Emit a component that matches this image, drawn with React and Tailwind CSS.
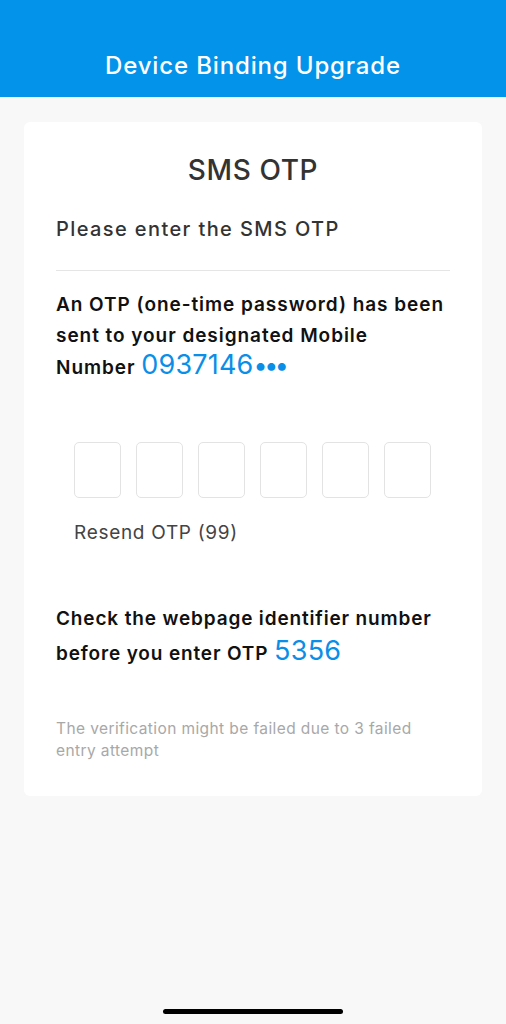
export default function App() {
  const boxes = [0, 1, 2, 3, 4, 5];

  return (
    <div className="min-h-[1024px] bg-[#f8f8f8] flex flex-col font-['Inter',Arial,sans-serif]">
      {/* Header */}
      <div className="h-[97px] bg-[#0393ea] flex items-end justify-center pb-[13px]">
        <h1 className="text-[24px] font-medium text-white tracking-[0.85px]">Device Binding Upgrade</h1>
      </div>

      {/* Card */}
      <div className="mx-6 mt-[25px] bg-white rounded-md px-8 pt-[24px] pb-[34px]">
        <h2 className="text-center text-[28px] font-medium text-[#333] leading-[48px] tracking-[0.6px]">SMS OTP</h2>
        <p className="mt-[20px] text-[20px] text-[#333] font-medium leading-[30px] tracking-[1.4px]">Please enter the SMS OTP</p>
        <div className="mt-[26px] h-px bg-[#e5e5e5]" />

        <p className="mt-[18px] text-[19px] font-semibold text-[#111] leading-[31px] tracking-[0.95px]">
          An OTP (one-time password) has been sent to your designated Mobile Number{' '}
          <span className="text-[27px] font-normal text-[#0a8ee8] leading-none tracking-[0.2px]">
            0937146<span className="text-[25px] tracking-[-3.5px]">•••</span>
          </span>
        </p>

        {/* OTP boxes */}
        <div className="mt-[59px] px-[18px] flex gap-[15px]">
          {boxes.map((b) => (
            <div key={b} className="w-[47px] h-[56px] rounded-[5px] border border-[#e3e3e3]" />
          ))}
        </div>
        <p className="mt-[20px] px-[18px] text-[19px] text-[#444] leading-[30px] tracking-[0.7px]">Resend OTP (99)</p>

        <p className="mt-[53px] text-[19px] font-semibold text-[#111] leading-[35px] tracking-[0.85px]">
          Check the webpage identifier number before you enter OTP{' '}
          <span className="text-[27px] font-normal text-[#0a8ee8] leading-none tracking-[0.3px]">5356</span>
        </p>

        <p className="mt-[47px] text-[15.5px] text-[#a8a8a8] leading-[22px] tracking-[0.4px]">
          The verification might be failed due to 3 failed entry attempt
        </p>
      </div>

      <div className="flex-1" />
      <div className="flex justify-center pb-[10px]">
        <div className="w-[180px] h-[5px] rounded-full bg-black" />
      </div>
    </div>
  );
}
